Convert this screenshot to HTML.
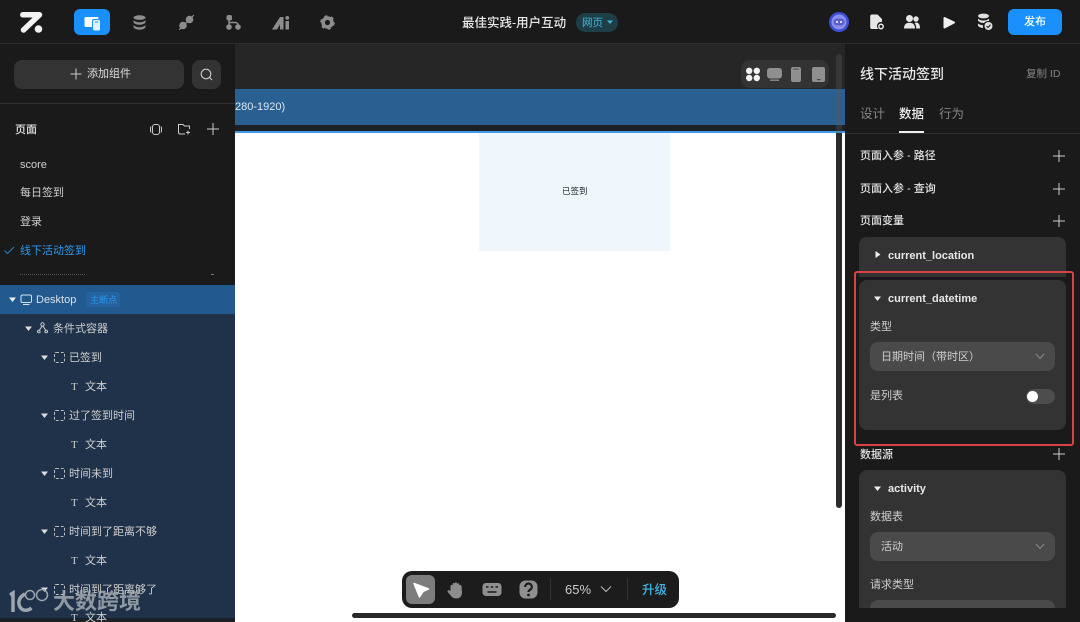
<!DOCTYPE html>
<html><head><meta charset="utf-8">
<style>
html,body{margin:0;padding:0;background:#fff}
#p{position:relative;width:1080px;height:622px;overflow:hidden;background:#fff;font-family:"Liberation Sans","Noto Sans CJK SC",sans-serif;color:#ddd}
#p div,#p svg,#p span.a{position:absolute}
.t{white-space:nowrap;line-height:16px}
.s{font-size:11px;color:#cfcfcf}
.h{font-size:11px;color:#e4e4e4;font-weight:500}
svg{display:block}
</style></head><body><div id="p">
<!-- canvas -->
<div style="left:235px;top:44px;width:610px;height:45px;background:#262626"></div>
<div style="left:235px;top:89px;width:610px;height:36px;background:#2a5f92"></div>
<div style="left:235px;top:125px;width:610px;height:6px;background:#1d2126"></div>
<div style="left:235px;top:131px;width:610px;height:2px;background:#3f9be8"></div>
<div style="left:479px;top:133px;width:191px;height:118px;background:#eff7fd"></div>
<div class="t" style="left:562px;top:183px;font-size:8.5px;color:#222">已签到</div>
<div class="t" style="left:235px;top:99px;font-size:11px;color:#dbe6f0">280-1920)</div>
<div style="left:836px;top:54px;width:6px;height:79px;background:rgba(90,90,90,.35);border-radius:3px 3px 0 0"></div>
<div style="left:836px;top:133px;width:6px;height:375px;background:#2b2b2b;border-radius:0 0 3px 3px"></div>
<div style="left:352px;top:613px;width:484px;height:5px;background:#2a2a2a;border-radius:3px"></div>
<!-- device switch -->
<div style="left:741px;top:60px;width:88px;height:28px;background:#333;border-radius:9px"></div>
<svg style="left:745px;top:66px" width="80" height="17" viewBox="0 0 80 17"><g fill="#f2f2f2"><circle cx="4.200" cy="4.800" r="3.200"/><circle cx="11.800" cy="4.800" r="3.200"/><circle cx="4.200" cy="12" r="3.200"/><circle cx="11.800" cy="12" r="3.200"/></g><g fill="#8f8f8f"><rect x="22" y="2" width="15" height="10.500" rx="3"/><rect x="25" y="13.500" width="9" height="1.400"/><rect x="46" y="1" width="10" height="15" rx="2"/><rect x="67" y="1" width="13" height="15" rx="2"/></g><rect x="48.500" y="2.500" width="5" height="1.200" fill="#555"/><rect x="72" y="13" width="3.500" height="1.200" fill="#444"/></svg>
<!-- toolbar bottom -->
<div style="left:402px;top:571px;width:277px;height:37px;background:#1c1c1c;border-radius:10px"></div>
<div style="left:406px;top:575px;width:29px;height:29px;background:#7d7d7d;border-radius:6px"></div>
<svg style="left:411px;top:580px" width="19" height="19" viewBox="0 0 19 19"><path d="M3 3.500L17.500 9L12 11.500L8.500 17Z" fill="#fff" stroke="#fff" stroke-width="1.500" stroke-linejoin="round"/></svg>
<svg style="left:447px;top:581px" width="18" height="18" viewBox="0 0 18 18"><path d="M3.500 10V5a1.100 1.100 0 0 1 2.200 0V3a1.100 1.100 0 0 1 2.200 0V2.500a1.100 1.100 0 0 1 2.200 0v.8a1.100 1.100 0 0 1 2.200 0V5a1.100 1.100 0 0 1 2.200 0l.500 6.500c0 4-2.500 6-5.500 6s-4.500-1-6-3.200L.700 11c-.8-1.200.7-2.200 1.800-1.500z" fill="#8d8d8d"/></svg>
<svg style="left:482px;top:582px" width="20" height="15" viewBox="0 0 20 15"><rect x="0.500" y="1" width="19" height="13" rx="3.500" fill="#8f8f8f"/><path d="M4 5h2.500M8.700 5h2.500M13.500 5h2.500M5.500 10h9" stroke="#1c1c1c" stroke-width="1.500"/></svg>
<svg style="left:519px;top:580px" width="19" height="19" viewBox="0 0 19 19"><rect x="0.500" y="0.500" width="18" height="18" rx="6" fill="#8f8f8f"/><path d="M6.200 7a3.300 3.300 0 1 1 4.800 2.800c-1 .6-1.500 1-1.500 2.200" stroke="#1c1c1c" stroke-width="2.200" fill="none"/><circle cx="9.500" cy="15" r="1.400" fill="#1c1c1c"/></svg>
<div style="left:550px;top:578px;width:1px;height:22px;background:#333"></div>
<div class="t" style="left:565px;top:582px;font-size:13px;color:#ccc">65%</div>
<svg style="left:600px;top:585px" width="12" height="8" viewBox="0 0 12 8"><path d="M1 1.500L6 6.500L11 1.500" stroke="#bbb" fill="none"/></svg>
<div style="left:627px;top:578px;width:1px;height:22px;background:#333"></div>
<div class="t" style="left:642px;top:582px;font-size:12.500px;color:#3fb8e8;font-weight:500">升级</div>
<!-- top bar -->
<div style="left:0;top:0;width:1080px;height:44px;background:#1a1a1a;border-bottom:1px solid #2e2e2e;box-sizing:border-box"></div>
<svg style="left:19px;top:11px" width="25" height="23" viewBox="0 0 25 23"><path d="M3.800 3.800H20.500L4.500 19" stroke="#f2f2f2" stroke-width="5.500" fill="none" stroke-linecap="round" stroke-linejoin="round"/><circle cx="19.500" cy="18" r="3.800" fill="#f2f2f2"/></svg>
<div style="left:74px;top:9px;width:36px;height:26px;background:#1a90ff;border-radius:6px"></div>
<svg style="left:84px;top:16px" width="17" height="15" viewBox="0 0 17 15"><path d="M2 1h11a1.500 1.500 0 0 1 1.500 1.500V3H10a2 2 0 0 0-2 2v6H2a1.500 1.500 0 0 1-1.500-1.500v-7A1.500 1.500 0 0 1 2 1z" fill="#fff"/><rect x="9" y="4" width="7" height="10.500" rx="1.500" fill="#dff0ff"/><rect x="11" y="5.500" width="3" height="1" fill="#1a90ff"/></svg>
<svg style="left:133px;top:15px" width="13" height="15" viewBox="0 0 13 15"><g fill="#8d8d8d"><ellipse cx="6.500" cy="2.600" rx="6" ry="2.300"/><path d="M.5 5c1 1.500 3 2.200 6 2.200S11.500 6.500 12.500 5v2.500c-1 1.500-3 2.200-6 2.200S1.500 9 .5 7.500z"/><path d="M.5 10c1 1.500 3 2.200 6 2.200s5-.7 6-2.200v2.300c-1 1.500-3 2.400-6 2.400s-5-.9-6-2.400z"/></g></svg>
<svg style="left:179px;top:15px" width="15" height="15" viewBox="0 0 15 15"><path d="M0 15L15 0" stroke="#8d8d8d" stroke-width="1.300"/><circle cx="4" cy="10.500" r="3.800" fill="#8d8d8d"/><circle cx="10.500" cy="4.500" r="3.800" fill="#8d8d8d"/></svg>
<svg style="left:226px;top:15px" width="15" height="15" viewBox="0 0 15 15"><g fill="#8d8d8d"><rect x="0.500" y="0" width="5.500" height="5.500" rx="2"/><circle cx="3" cy="12" r="2.800"/><circle cx="12" cy="12" r="2.800"/></g><path d="M3 5v6M3 7.500h6.500a2.500 2.500 0 0 1 2.500 2.500" stroke="#8d8d8d" stroke-width="1.500" fill="none"/></svg>
<svg style="left:272px;top:16px" width="18" height="14" viewBox="0 0 18 14"><path d="M0 13.500L8 1h3.500v12.500H8V8.500L5 13.500z" fill="#8d8d8d"/><rect x="13.500" y="5" width="3.500" height="8.500" fill="#8d8d8d"/><circle cx="15.250" cy="1.900" r="1.900" fill="#8d8d8d"/></svg>
<svg style="left:320px;top:15px" width="15" height="15" viewBox="0 0 15 15"><circle cx="7.500" cy="7.500" r="4.400" fill="none" stroke="#8d8d8d" stroke-width="3.600"/><circle cx="7.500" cy="7.500" r="6.300" fill="none" stroke="#8d8d8d" stroke-width="2" stroke-dasharray="3 3.600"/></svg>
<div class="t" style="left:462px;top:15px;font-size:12.500px;color:#e8e8e8;font-weight:500">最佳实践-用户互动</div>
<div style="left:576px;top:13px;width:42px;height:19px;background:#1e3f47;border-radius:10px"></div>
<div class="t" style="left:582px;top:15px;font-size:10.500px;color:#43b6d8">网页</div>
<svg style="left:607px;top:20px" width="6" height="5" viewBox="0 0 6 5"><path d="M0 0.500H6L3 4z" fill="#43b6d8"/></svg>
<svg style="left:829px;top:12px" width="20" height="20" viewBox="0 0 20 20"><circle cx="10" cy="10" r="10" fill="#3d4fd6"/><circle cx="10" cy="10" r="7.500" fill="#8b90ea"/><rect x="4.500" y="6.500" width="11" height="7" rx="3.500" fill="#5a5fd0"/><circle cx="8" cy="10" r="1.100" fill="#e8e8ff"/><circle cx="12" cy="10" r="1.100" fill="#e8e8ff"/></svg>
<svg style="left:869px;top:14px" width="16" height="16" viewBox="0 0 16 16"><path d="M3 0.500H8.500L13 5V8a4 4 0 0 0-3.500 7H3a1.800 1.800 0 0 1-1.800-1.800V2.300A1.800 1.800 0 0 1 3 .5z" fill="#e6e6e6"/><circle cx="12" cy="12.500" r="2.200" fill="none" stroke="#e6e6e6" stroke-width="1.500"/></svg>
<svg style="left:904px;top:15px" width="16" height="14" viewBox="0 0 16 14"><circle cx="5.500" cy="3.500" r="3.500" fill="#e6e6e6"/><path d="M0 13.500c0-4 2-5.800 5.500-5.800S11 9.500 11 13.500z" fill="#e6e6e6"/><circle cx="12" cy="4" r="2.700" fill="#e6e6e6"/><path d="M12 7.500c2.700 0 4 2 4 6h-3.800c0-2.500-.5-4.500-1.700-5.500z" fill="#e6e6e6"/></svg>
<svg style="left:943px;top:15px" width="13" height="15" viewBox="0 0 13 15"><path d="M1.500 3L11 7.500L1.500 12.500z" fill="#eee" stroke="#eee" stroke-width="2" stroke-linejoin="round"/></svg>
<svg style="left:977px;top:13px" width="16" height="18" viewBox="0 0 16 18"><g fill="#e0e0e0"><ellipse cx="6.500" cy="3" rx="5.500" ry="2.400"/><path d="M1 5.500c1 1.300 3 2 5.500 2s4.500-.7 5.500-2V8c-3 0-4 1-5 2c-3 0-5-1-6-2.500z"/><path d="M1 10.500c1 1 3 1.700 5 1.700V15c-2.500 0-4-1-5-2.200z"/></g><circle cx="11.500" cy="13" r="4" fill="#e0e0e0"/><path d="M9.500 13l1.500 1.500 2.500-2.800" stroke="#1a1a1a" stroke-width="1.100" fill="none"/></svg>
<div style="left:1008px;top:9px;width:54px;height:26px;background:#1a90ff;border-radius:6px"></div>
<div class="t" style="left:1024px;top:14px;font-size:11px;color:#fff;font-weight:500">发布</div>
<!-- left sidebar -->
<div style="left:0;top:44px;width:235px;height:241px;background:#1a1a1a"></div>
<div style="left:14px;top:60px;width:170px;height:29px;background:#333;border-radius:8px"></div>
<svg style="left:70px;top:68px" width="12" height="12" viewBox="0 0 12 12"><path d="M6 0.500V11.500M.5 6H11.500" stroke="#ccc"/></svg>
<div class="t" style="left:87px;top:66px;font-size:11px;color:#ddd">添加组件</div>
<div style="left:192px;top:60px;width:29px;height:29px;background:#333;border-radius:8px"></div>
<svg style="left:200px;top:68px" width="13" height="13" viewBox="0 0 13 13"><circle cx="6" cy="6" r="4.800" fill="none" stroke="#ccc" stroke-width="1.100"/><path d="M9.500 9.500L12 12" stroke="#ccc" stroke-width="1.100"/></svg>
<div style="left:0;top:103px;width:235px;height:1px;background:#2f2f2f"></div>
<div class="t h" style="left:15px;top:122px">页面</div>
<svg style="left:150px;top:124px" width="12" height="11" viewBox="0 0 12 11"><rect x="2.500" y="0.500" width="7" height="10" rx="2.500" fill="none" stroke="#ccc"/><path d="M1 2.500C.3 4 .3 7 1 8.500M11 2.500c.7 1.500.7 4.500 0 6" stroke="#ccc" fill="none"/></svg>
<svg style="left:178px;top:123px" width="13" height="12" viewBox="0 0 13 12"><path d="M7 11H2A1.500 1.500 0 0 1 .5 9.500V1.500H5L6.500 3H11.500V6" fill="none" stroke="#ccc"/><path d="M10 7.500V11.500M8 9.500H12" stroke="#ccc"/></svg>
<svg style="left:207px;top:123px" width="12" height="12" viewBox="0 0 12 12"><path d="M6 0V12M0 6H12" stroke="#ccc"/></svg>
<div class="t s" style="left:20px;top:157px">score</div>
<div class="t s" style="left:20px;top:185px">每日签到</div>
<div class="t s" style="left:20px;top:214px">登录</div>
<div class="t" style="left:20px;top:243px;font-size:11px;color:#2f97ee">线下活动签到</div>
<svg style="left:4px;top:246px" width="11" height="9" viewBox="0 0 11 9"><path d="M.5 4.500L3.500 7.500L10 1" stroke="#2a7fc8" fill="none"/></svg>
<div style="left:20px;top:274px;width:65px;height:1px;border-top:1px dotted #555"></div>
<div style="left:211px;top:274px;width:3px;height:1px;background:#777"></div>
<!-- tree -->
<div style="left:0;top:285px;width:235px;height:333px;background:#1f3249"></div>
<div style="left:0;top:618px;width:235px;height:4px;background:#1c2127"></div>
<div style="left:0;top:285px;width:235px;height:29px;background:#225a90"></div>
<svg style="left:9px;top:297px" width="7" height="6" viewBox="0 0 7 6"><path d="M0 .5H7L3.500 5z" fill="#eee"/></svg>
<svg style="left:20px;top:294px" width="13" height="12" viewBox="0 0 13 12"><rect x="1" y="1" width="10.500" height="7.500" rx="1.500" fill="none" stroke="#d8e0e8"/><path d="M3 10.500H9.500" stroke="#d8e0e8"/></svg>
<div class="t" style="left:36px;top:292px;font-size:11px;color:#d8e0e8">Desktop</div>
<div style="left:86px;top:292px;width:34px;height:15px;background:#24639f;border-radius:3px"></div>
<div class="t" style="left:90px;top:292px;font-size:9px;color:#2a95ee">主断点</div>
<svg style="left:25px;top:326px" width="7" height="6" viewBox="0 0 7 6"><path d="M0 .5H7L3.500 5z" fill="#ddd"/></svg>
<svg style="left:37px;top:322px" width="11" height="12" viewBox="0 0 11 12"><circle cx="5.500" cy="2.500" r="1.700" fill="none" stroke="#ccc"/><circle cx="1.800" cy="9.500" r="1.300" fill="none" stroke="#ccc"/><circle cx="9.200" cy="9.500" r="1.300" fill="none" stroke="#ccc"/><path d="M5 4.200L2.500 8M6 4.200L8.500 8" stroke="#ccc"/></svg>
<div class="t s" style="left:53px;top:321px">条件式容器</div>
<!-- rows -->
<svg style="left:41px;top:355px" width="7" height="6" viewBox="0 0 7 6"><path d="M0 .5H7L3.500 5z" fill="#ddd"/></svg>
<div style="left:54px;top:352px;width:9px;height:9px;border:1px dashed #bbb;border-radius:2px"></div>
<div class="t s" style="left:69px;top:350px">已签到</div>
<div class="t" style="left:71px;top:379px;font:11px/16px 'Liberation Serif',serif;color:#ccc">T</div>
<div class="t s" style="left:85px;top:379px">文本</div>
<svg style="left:41px;top:413px" width="7" height="6" viewBox="0 0 7 6"><path d="M0 .5H7L3.500 5z" fill="#ddd"/></svg>
<div style="left:54px;top:410px;width:9px;height:9px;border:1px dashed #bbb;border-radius:2px"></div>
<div class="t s" style="left:69px;top:408px">过了签到时间</div>
<div class="t" style="left:71px;top:437px;font:11px/16px 'Liberation Serif',serif;color:#ccc">T</div>
<div class="t s" style="left:85px;top:437px">文本</div>
<svg style="left:41px;top:471px" width="7" height="6" viewBox="0 0 7 6"><path d="M0 .5H7L3.500 5z" fill="#ddd"/></svg>
<div style="left:54px;top:468px;width:9px;height:9px;border:1px dashed #bbb;border-radius:2px"></div>
<div class="t s" style="left:69px;top:466px">时间未到</div>
<div class="t" style="left:71px;top:495px;font:11px/16px 'Liberation Serif',serif;color:#ccc">T</div>
<div class="t s" style="left:85px;top:495px">文本</div>
<svg style="left:41px;top:529px" width="7" height="6" viewBox="0 0 7 6"><path d="M0 .5H7L3.500 5z" fill="#ddd"/></svg>
<div style="left:54px;top:526px;width:9px;height:9px;border:1px dashed #bbb;border-radius:2px"></div>
<div class="t s" style="left:69px;top:524px">时间到了距离不够</div>
<div class="t" style="left:71px;top:553px;font:11px/16px 'Liberation Serif',serif;color:#ccc">T</div>
<div class="t s" style="left:85px;top:553px">文本</div>
<svg style="left:41px;top:587px" width="7" height="6" viewBox="0 0 7 6"><path d="M0 .5H7L3.500 5z" fill="#ddd"/></svg>
<div style="left:54px;top:584px;width:9px;height:9px;border:1px dashed #bbb;border-radius:2px"></div>
<div class="t s" style="left:69px;top:582px">时间到了距离够了</div>
<div class="t" style="left:71px;top:610px;font:11px/16px 'Liberation Serif',serif;color:#ccc">T</div>
<div class="t s" style="left:85px;top:610px">文本</div>
<!-- watermark -->
<svg style="left:9px;top:588px" width="42" height="26" viewBox="0 0 42 26"><path d="M1 7L4 5V24" stroke="#9ea6ad" stroke-width="3.500" fill="none"/><path d="M16 6C10 9 9 14 10.500 18c2 5 8 5.500 12 2" stroke="#9ea6ad" stroke-width="3.500" fill="none"/><circle cx="21" cy="7" r="4.500" fill="none" stroke="#9ea6ad" stroke-width="1.500"/><circle cx="33" cy="7" r="5.500" fill="none" stroke="#9ea6ad" stroke-width="1.500"/></svg>
<div class="t" style="left:53px;top:588px;font-size:22px;line-height:28px;color:rgba(165,172,178,.85);font-weight:700">大数跨境</div>
<!-- right panel -->
<div style="left:845px;top:44px;width:235px;height:578px;background:#1a1a1a"></div>
<div class="t" style="left:860px;top:66px;font-size:14px;color:#e8e8e8;font-weight:500">线下活动签到</div>
<div class="t" style="left:1026px;top:66px;font-size:10.500px;color:#858585">复制 ID</div>
<div class="t" style="left:860px;top:106px;font-size:12.500px;color:#858585">设计</div>
<div class="t" style="left:899px;top:106px;font-size:12.500px;color:#eee;font-weight:500">数据</div>
<div class="t" style="left:939px;top:106px;font-size:12.500px;color:#858585">行为</div>
<div style="left:845px;top:133px;width:235px;height:1px;background:#2f2f2f"></div>
<div style="left:899px;top:131px;width:25px;height:2px;background:#eee"></div>
<div class="t h" style="left:860px;top:148px">页面入参 - 路径</div>
<svg style="left:1053px;top:150px" width="12" height="12" viewBox="0 0 12 12"><path d="M6 0V12M0 6H12" stroke="#ccc"/></svg>
<div class="t h" style="left:860px;top:181px">页面入参 - 查询</div>
<svg style="left:1053px;top:183px" width="12" height="12" viewBox="0 0 12 12"><path d="M6 0V12M0 6H12" stroke="#ccc"/></svg>
<div class="t h" style="left:860px;top:213px">页面变量</div>
<svg style="left:1053px;top:215px" width="12" height="12" viewBox="0 0 12 12"><path d="M6 0V12M0 6H12" stroke="#ccc"/></svg>
<div style="left:859px;top:237px;width:207px;height:40px;background:#333;border-radius:8px 8px 0 0"></div>
<svg style="left:875px;top:251px" width="6" height="7" viewBox="0 0 6 7"><path d="M.5 0V7L5.500 3.500z" fill="#eee"/></svg>
<div class="t" style="left:888px;top:248px;font-size:11px;color:#e8e8e8;font-weight:700">current_location</div>
<div style="left:859px;top:280px;width:207px;height:150px;background:#333;border-radius:8px"></div>
<svg style="left:874px;top:296px" width="7" height="6" viewBox="0 0 7 6"><path d="M0 .5H7L3.500 5z" fill="#eee"/></svg>
<div class="t" style="left:888px;top:291px;font-size:11px;color:#e8e8e8;font-weight:700">current_datetime</div>
<div class="t s" style="left:870px;top:319px">类型</div>
<div style="left:870px;top:342px;width:185px;height:29px;background:#4a4a4a;border-radius:8px"></div>
<div class="t s" style="left:881px;top:349px">日期时间（带时区）</div>
<svg style="left:1035px;top:353px" width="10" height="7" viewBox="0 0 10 7"><path d="M1 1L5 5.500L9 1" stroke="#888" fill="none"/></svg>
<div class="t s" style="left:870px;top:388px">是列表</div>
<div style="left:1026px;top:389px;width:29px;height:15px;background:#4d4d4d;border-radius:8px"></div>
<div style="left:1027px;top:391px;width:11px;height:11px;background:#fff;border-radius:50%"></div>
<div style="left:854px;top:271px;width:216px;height:171px;border:2px solid #d84343;border-radius:3px"></div>
<div class="t h" style="left:860px;top:447px">数据源</div>
<svg style="left:1053px;top:448px" width="12" height="12" viewBox="0 0 12 12"><path d="M6 0V12M0 6H12" stroke="#ccc"/></svg>
<div style="left:859px;top:470px;width:207px;height:138px;background:#333;border-radius:8px 8px 0 0;overflow:hidden"><div style="left:11px;top:130px;width:185px;height:29px;background:#4a4a4a;border-radius:8px"></div></div>
<svg style="left:874px;top:486px" width="7" height="6" viewBox="0 0 7 6"><path d="M0 .5H7L3.500 5z" fill="#eee"/></svg>
<div class="t" style="left:888px;top:481px;font-size:11px;color:#e8e8e8;font-weight:700">activity</div>
<div class="t s" style="left:870px;top:509px">数据表</div>
<div style="left:870px;top:532px;width:185px;height:29px;background:#4a4a4a;border-radius:8px"></div>
<div class="t s" style="left:881px;top:539px">活动</div>
<svg style="left:1035px;top:543px" width="10" height="7" viewBox="0 0 10 7"><path d="M1 1L5 5.500L9 1" stroke="#888" fill="none"/></svg>
<div class="t s" style="left:870px;top:577px">请求类型</div>
</div></body></html>
